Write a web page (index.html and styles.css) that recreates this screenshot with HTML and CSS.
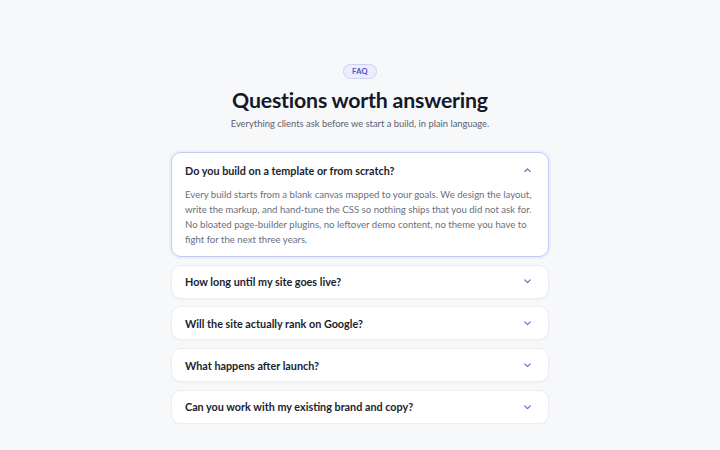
FILE: index.html
```html
<!DOCTYPE html>
<html lang="en">
<head>
<meta charset="utf-8">
<title>FAQ</title>
<link rel="stylesheet" href="styles.css">
</head>
<body>
<main class="faq">
  <header class="faq-head">
    <span class="pill">FAQ</span>
    <h1 class="title">Questions worth answering</h1>
    <p class="lead">Everything clients ask before we start a build, in plain language.</p>
  </header>
  <div class="list">
    <div class="item open">
      <div class="q">
        <span>Do you build on a template or from scratch?</span>
        <svg class="chev" viewBox="0 0 10 6" width="7" height="4.5"><path d="M1 5 L5 1 L9 5" fill="none" stroke="currentColor" stroke-width="1.7" stroke-linecap="round" stroke-linejoin="round"/></svg>
      </div>
      <p class="a">Every build starts from a blank canvas mapped to your goals. We design the layout, write the markup, and hand-tune the CSS so nothing ships that you did not ask for. No bloated page-builder plugins, no leftover demo content, no theme you have to fight for the next three years.</p>
    </div>
    <div class="item">
      <div class="q">
        <span>How long until my site goes live?</span>
        <svg class="chev" viewBox="0 0 10 6" width="7" height="4.5"><path d="M1 1 L5 5 L9 1" fill="none" stroke="currentColor" stroke-width="1.7" stroke-linecap="round" stroke-linejoin="round"/></svg>
      </div>
    </div>
    <div class="item">
      <div class="q">
        <span>Will the site actually rank on Google?</span>
        <svg class="chev" viewBox="0 0 10 6" width="7" height="4.5"><path d="M1 1 L5 5 L9 1" fill="none" stroke="currentColor" stroke-width="1.7" stroke-linecap="round" stroke-linejoin="round"/></svg>
      </div>
    </div>
    <div class="item">
      <div class="q">
        <span>What happens after launch?</span>
        <svg class="chev" viewBox="0 0 10 6" width="7" height="4.5"><path d="M1 1 L5 5 L9 1" fill="none" stroke="currentColor" stroke-width="1.7" stroke-linecap="round" stroke-linejoin="round"/></svg>
      </div>
    </div>
    <div class="item">
      <div class="q">
        <span>Can you work with my existing brand and copy?</span>
        <svg class="chev" viewBox="0 0 10 6" width="7" height="4.5"><path d="M1 1 L5 5 L9 1" fill="none" stroke="currentColor" stroke-width="1.7" stroke-linecap="round" stroke-linejoin="round"/></svg>
      </div>
    </div>
  </div>
</main>
</body>
</html>
```

FILE: styles.css
```css
* { box-sizing: border-box; }

html, body {
  margin: 0;
  background: #f7f8fa;
}

body {
  font-family: Lato, "Noto Sans", sans-serif;
  color: #161a2b;
}

.faq {
  width: 378px;
  margin: 0 auto;
  padding-top: 64px;
}

.faq-head {
  display: flex;
  flex-direction: column;
  align-items: center;
}

.pill {
  display: inline-block;
  height: 15px;
  padding: 0 8px;
  border: 1px solid #cdd0f6;
  border-radius: 8px;
  background: #eceefe;
  color: #4f4fc4;
  font-size: 7.5px;
  font-weight: 700;
  line-height: 13px;
  letter-spacing: 0.3px;
}

.title {
  margin: 8px 0 0;
  font-size: 21.3px;
  font-weight: 700;
  letter-spacing: -0.2px;
  line-height: 26px;
  color: #141829;
}

.lead {
  margin: 4px 0 0;
  font-size: 9.4px;
  line-height: 14px;
  color: #5c6170;
}

.list {
  margin-top: 21px;
  display: flex;
  flex-direction: column;
  gap: 7.7px;
}

.item {
  background: #fff;
  border: 1px solid #eceef2;
  border-radius: 10px;
  box-shadow: 0 1px 2px rgba(20, 24, 40, 0.03);
}

.item.open {
  border-color: #c5c9f3;
  box-shadow: 0 0 0 2px rgba(120, 128, 235, 0.07);
}

.q {
  display: flex;
  align-items: center;
  justify-content: space-between;
  height: 32px;
  padding: 0 17px 0 13px;
  font-size: 10.8px;
  font-weight: 700;
  color: #1a1e2e;
}

.open .q {
  height: 34px;
}

.chev {
  color: #6b66d8;
  flex: none;
}

.a {
  margin: 0;
  padding: 0 13px 9px;
  font-size: 9.6px;
  line-height: 15px;
  color: #6a6f7c;
}
```
